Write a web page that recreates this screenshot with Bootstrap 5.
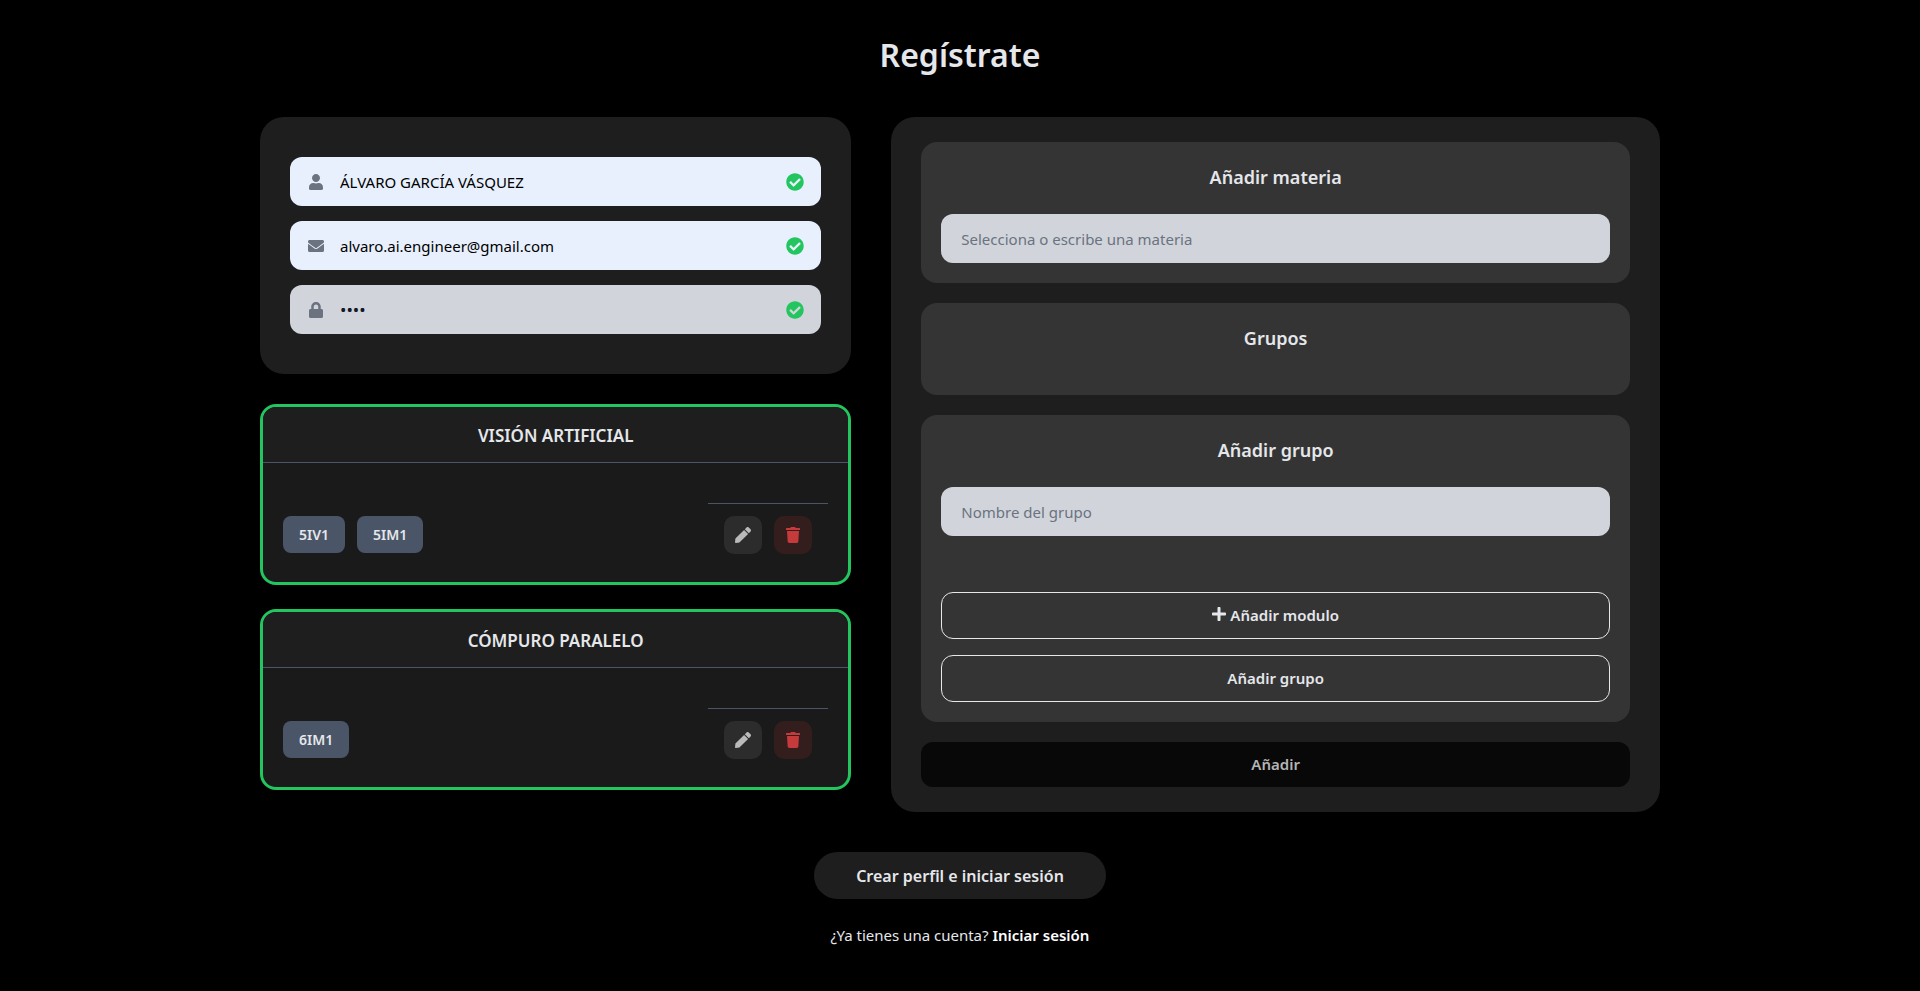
<!DOCTYPE html>
<html lang="es">
<head>
<meta charset="utf-8">
<meta name="viewport" content="width=device-width, initial-scale=1">
<title>Regístrate</title>
<link href="https://cdn.jsdelivr.net/npm/bootstrap@5.3.0/dist/css/bootstrap.min.css" rel="stylesheet">
<style>
  :root { --panel: #1e1e1e; --section: #343434; --ink: #e5e7eb; --field: #d1d5db; --muted: #6b7280; --ok: #22c55e; --slate: #4a5568; }
  body { background: #000; color: var(--ink); font-family: "Noto Sans", "Open Sans", sans-serif; font-size: 15px; line-height: 24px; }
  svg { fill: currentColor; display: block; }
  .page { max-width: 1424px; padding-top: 32px; }
  .page-title { font-size: 32px; font-weight: 600; line-height: 45px; margin-bottom: 40px; }
  .columns { display: grid; gap: 40px; }
  @media (min-width: 992px) { .columns { grid-template-columns: 10fr 13fr; align-items: start; } }
  .panel { background: var(--panel); border-radius: 24px; }
  .account { padding: 40px 30px; gap: 15px; margin-bottom: 30px; }
  .panel-subject { padding: 25px 30px; }

  .field { position: relative; }
  .field-icon, .field-ok { position: absolute; top: 0; bottom: 0; display: flex; align-items: center; }
  .field-icon { left: 18px; width: 16px; justify-content: center; color: var(--muted); }
  .field-ok { right: 17px; color: var(--ok); }
  .entry, .entry:focus { background: var(--field); color: #111827; border: 0; border-radius: 12px; height: 49px; padding: 0 20px; font-size: 15px; }
  .entry::placeholder { color: var(--muted); }
  .entry[type=password] { font-size: 17px; }
  .field .entry { padding-left: 50px; padding-right: 50px; }
  .entry.filled { background: #e8f0fe; color: #000; }

  .subject { border: 3px solid var(--ok); border-radius: 16px; background: #1a1a1a; overflow: hidden; }
  .subject-name { background: var(--panel); border-bottom: 1px solid var(--slate); font-size: 17px; font-weight: 600; line-height: 24px; padding: 17px 16px 14px; margin: 0; text-align: center; }
  .subject-body { padding: 40px 20px 16px; }
  .cell { border-top: 1px solid transparent; padding: 12px 0; gap: 12px; }
  .cell-actions { border-color: var(--slate); width: 120px; }
  .chip { background: var(--slate); border-radius: 8px; font-size: 14px; font-weight: 600; height: 37px; line-height: 38px; padding: 0 16px; }
  .tool { width: 38px; height: 38px; border: 0; border-radius: 10px; display: grid; place-items: center; padding: 0; background: #2c2c2c; color: #b9babc; }
  .tool-delete { background: #331e1d; color: #c53b3b; }

  .section { background: var(--section); border-radius: 16px; padding: 20px; margin-bottom: 20px; }
  .section-title { font-size: 18px; font-weight: 600; line-height: 30px; margin-bottom: 22px; text-align: center; }
  .btn-line { color: var(--ink); border: 1px solid var(--ink); border-radius: 12px; font-size: 15px; font-weight: 600; height: 47px; width: 100%; }
  .modules { height: 56px; }
  .btn-add, .btn-add:disabled { background: #080808; color: #b4b4b5; border: 0; border-radius: 12px; font-size: 15px; font-weight: 600; height: 45px; width: 100%; opacity: 1; }
  .btn-create { background: var(--panel); color: var(--ink); border: 0; border-radius: 24px; font-size: 16px; font-weight: 600; height: 47px; padding: 0 42px; }
  .login a { color: #fff; font-weight: 600; text-decoration: none; }
</style>
</head>
<body>
<svg class="d-none" aria-hidden="true">
  <symbol id="i-check" viewBox="0 0 512 512"><path d="M504 256c0 136.967-111.033 248-248 248S8 392.967 8 256 119.033 8 256 8s248 111.033 248 248zM227.314 387.314l184-184c6.248-6.248 6.248-16.379 0-22.627l-22.627-22.627c-6.248-6.249-16.379-6.249-22.628 0L216 308.118l-70.059-70.059c-6.248-6.248-16.379-6.248-22.628 0l-22.627 22.627c-6.248 6.248-6.248 16.379 0 22.627l104 104c6.249 6.249 16.379 6.249 22.628.001z"/></symbol>
  <symbol id="i-pen" viewBox="0 0 512 512"><path d="M290.74 93.24l128.02 128.02-277.99 277.99-114.14 12.6C11.35 513.54-1.56 500.62.14 485.34l12.7-114.22 277.9-277.88zm207.2-19.06l-60.11-60.11c-18.75-18.75-49.16-18.75-67.91 0l-56.55 56.55 128.02 128.02 56.55-56.55c18.75-18.76 18.75-49.16 0-67.91z"/></symbol>
  <symbol id="i-trash" viewBox="0 0 448 512"><path d="M432 32H312l-9.4-18.7A24 24 0 0 0 281.1 0H166.8a23.72 23.72 0 0 0-21.4 13.3L136 32H16A16 16 0 0 0 0 48v32a16 16 0 0 0 16 16h416a16 16 0 0 0 16-16V48a16 16 0 0 0-16-16zM53.2 467a48 48 0 0 0 47.9 45h245.8a48 48 0 0 0 47.9-45L416 128H32z"/></symbol>
</svg>
<main class="page container d-flex flex-column">
  <h1 class="page-title text-center">Regístrate</h1>
  <div class="columns">
    <div>
      <form class="panel account d-flex flex-column">
        <div class="field">
          <span class="field-icon"><svg width="14" height="16" viewBox="0 0 448 512"><path d="M224 256c70.7 0 128-57.3 128-128S294.7 0 224 0 96 57.3 96 128s57.3 128 128 128zm89.6 32h-16.7c-22.2 10.2-46.9 16-72.9 16s-50.6-5.8-72.9-16h-16.7C60.2 288 0 348.2 0 422.4V464c0 26.5 21.5 48 48 48h352c26.5 0 48-21.5 48-48v-41.6c0-74.2-60.2-134.4-134.4-134.4z"/></svg></span>
          <input class="form-control entry filled" type="text" aria-label="Nombre" value="ÁLVARO GARCÍA VÁSQUEZ">
          <span class="field-ok"><svg width="18" height="18"><use href="#i-check"/></svg></span>
        </div>
        <div class="field">
          <span class="field-icon"><svg width="16" height="16" viewBox="0 0 512 512"><path d="M502.3 190.8c3.9-3.1 9.7-.2 9.7 4.7V400c0 26.5-21.5 48-48 48H48c-26.5 0-48-21.5-48-48V195.6c0-5 5.7-7.8 9.7-4.7 22.4 17.4 52.1 39.5 154.1 113.6 21.1 15.4 56.7 47.8 92.2 47.6 35.7.3 72-32.8 92.3-47.6 102-74.1 131.6-96.3 154-113.7zM256 320c23.2.4 56.6-29.2 73.4-41.4 132.7-96.3 142.8-104.7 173.4-128.7 5.8-4.5 9.2-11.5 9.2-18.9v-19c0-26.5-21.5-48-48-48H48c-26.5 0-48 21.5-48 48v19c0 7.4 3.4 14.3 9.2 18.9 30.6 23.9 40.7 32.4 173.4 128.7 16.8 12.2 50.2 41.8 73.4 41.4z"/></svg></span>
          <input class="form-control entry filled" type="email" aria-label="Correo" value="alvaro.ai.engineer@gmail.com">
          <span class="field-ok"><svg width="18" height="18"><use href="#i-check"/></svg></span>
        </div>
        <div class="field">
          <span class="field-icon"><svg width="14" height="16" viewBox="0 0 448 512"><path d="M400 224h-24v-72C376 68.2 307.8 0 224 0S72 68.2 72 152v72H48c-26.5 0-48 21.5-48 48v192c0 26.5 21.5 48 48 48h352c26.5 0 48-21.5 48-48V272c0-26.5-21.5-48-48-48zm-104 0H152v-72c0-39.7 32.3-72 72-72s72 32.3 72 72v72z"/></svg></span>
          <input class="form-control entry" type="password" aria-label="Contraseña" value="1234">
          <span class="field-ok"><svg width="18" height="18"><use href="#i-check"/></svg></span>
        </div>
      </form>

      <article class="subject mb-4">
        <h2 class="subject-name">VISIÓN ARTIFICIAL</h2>
        <div class="subject-body d-flex justify-content-between">
          <div class="cell d-flex"><span class="chip">5IV1</span><span class="chip">5IM1</span></div>
          <div class="cell cell-actions d-flex justify-content-center">
            <button class="tool" type="button" aria-label="Editar"><svg width="16" height="16"><use href="#i-pen"/></svg></button>
            <button class="tool tool-delete" type="button" aria-label="Eliminar"><svg width="14" height="16"><use href="#i-trash"/></svg></button>
          </div>
        </div>
      </article>

      <article class="subject">
        <h2 class="subject-name">CÓMPURO PARALELO</h2>
        <div class="subject-body d-flex justify-content-between">
          <div class="cell d-flex"><span class="chip">6IM1</span></div>
          <div class="cell cell-actions d-flex justify-content-center">
            <button class="tool" type="button" aria-label="Editar"><svg width="16" height="16"><use href="#i-pen"/></svg></button>
            <button class="tool tool-delete" type="button" aria-label="Eliminar"><svg width="14" height="16"><use href="#i-trash"/></svg></button>
          </div>
        </div>
      </article>
    </div>

    <form class="panel panel-subject">
      <section class="section">
        <h2 class="section-title">Añadir materia</h2>
        <input class="form-control entry" type="text" aria-label="Materia" placeholder="Selecciona o escribe una materia">
      </section>
      <section class="section">
        <h2 class="section-title">Grupos</h2>
      </section>
      <section class="section">
        <h2 class="section-title">Añadir grupo</h2>
        <input class="form-control entry" type="text" aria-label="Grupo" placeholder="Nombre del grupo">
        <div class="modules"></div>
        <button class="btn btn-line d-flex align-items-center justify-content-center mb-3" type="button"><svg class="me-1 mb-1" width="14" height="16" viewBox="0 0 448 512"><path d="M416 208H272V64c0-17.67-14.33-32-32-32h-32c-17.67 0-32 14.33-32 32v144H32c-17.67 0-32 14.33-32 32v32c0 17.67 14.33 32 32 32h144v144c0 17.67 14.33 32 32 32h32c17.67 0 32-14.33 32-32V304h144c17.67 0 32-14.33 32-32v-32c0-17.67-14.33-32-32-32z"/></svg>Añadir modulo</button>
        <button class="btn btn-line" type="button">Añadir grupo</button>
      </section>
      <button class="btn btn-add" type="button" disabled>Añadir</button>
    </form>
  </div>

  <div class="text-center mt-4 pt-3 pb-4">
    <button class="btn btn-create mb-4" type="button">Crear perfil e iniciar sesión</button>
    <p class="login mb-0">¿Ya tienes una cuenta? <a href="#">Iniciar sesión</a></p>
  </div>
</main>
<script src="https://cdn.jsdelivr.net/npm/bootstrap@5.3.0/dist/js/bootstrap.bundle.min.js"></script>
</body>
</html>
